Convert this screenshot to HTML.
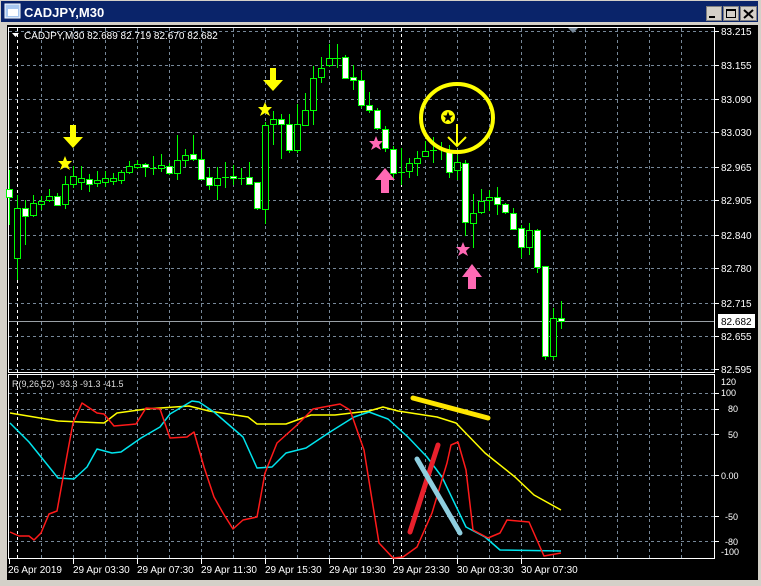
<!DOCTYPE html>
<html><head><meta charset="utf-8"><style>
html,body{margin:0;padding:0;width:761px;height:586px;overflow:hidden;background:#d4d0c8}
svg{display:block}
text{font-family:"Liberation Sans",sans-serif}
</style></head><body>
<svg width="761" height="586" viewBox="0 0 761 586" xmlns="http://www.w3.org/2000/svg">
<rect x="0" y="0" width="761" height="586" fill="#d4d0c8"/>
<rect x="1" y="1" width="757" height="21" fill="#0a246a"/>
<rect x="5" y="4" width="15" height="14" fill="#a8c8f0" stroke="#fff" stroke-width="1"/>
<rect x="8" y="9" width="10" height="7" fill="#fff"/>
<text x="24" y="17" font-size="13" font-weight="bold" fill="#fff">CADJPY,M30</text>
<g fill="#d4d0c8" stroke="#808080"><rect x="706.5" y="6.5" width="15" height="14"/><rect x="723.5" y="6.5" width="15" height="14"/><rect x="740.5" y="6.5" width="16" height="14"/></g>
<rect x="709" y="16" width="6" height="2" fill="#000"/>
<rect x="726.5" y="9.5" width="9" height="8" fill="none" stroke="#000"/><rect x="726" y="9" width="10" height="2" fill="#000"/>
<path d="M744 10 L753 18 M753 10 L744 18" stroke="#000" stroke-width="2"/>
<rect x="7" y="25" width="751" height="555" fill="#000"/>
<!-- plot borders -->
<g stroke="#fff" fill="none"><rect x="8.5" y="27.5" width="706" height="345"/><rect x="8.5" y="374.5" width="706" height="184"/></g>
<!-- grid -->
<g stroke="#778899" stroke-dasharray="3,3" stroke-width="1">
<path d="M9 31.5H714M9 65.5H714M9 99.5H714M9 132.5H714M9 167.5H714M9 200.5H714M9 235.5H714M9 268.5H714M9 303.5H714M9 336.5H714M9 369.5H714"/>
<path d="M9 393.5H714M9 409.5H714M9 434.5H714M9 475.5H714M9 516.5H714M9 541.5H714"/>
<path d="M41.5 28V372M73.5 28V372M105.5 28V372M137.5 28V372M169.5 28V372M201.5 28V372M233.5 28V372M265.5 28V372M297.5 28V372M329.5 28V372M361.5 28V372M393.5 28V372M425.5 28V372M457.5 28V372M489.5 28V372M521.5 28V372M553.5 28V372M585.5 28V372M617.5 28V372M649.5 28V372M681.5 28V372"/>
<path d="M41.5 375V558M73.5 375V558M105.5 375V558M137.5 375V558M169.5 375V558M201.5 375V558M233.5 375V558M265.5 375V558M297.5 375V558M329.5 375V558M361.5 375V558M393.5 375V558M425.5 375V558M457.5 375V558M489.5 375V558M521.5 375V558M553.5 375V558M585.5 375V558M617.5 375V558M649.5 375V558M681.5 375V558"/>
</g>
<g stroke="#fff" stroke-dasharray="3,3"><path d="M17.5 28V372M401.5 28V372M17.5 375V558M401.5 375V558"/></g>
<path d="M9 321.5H714" stroke="#9aa0a6"/>
<path d="M568 28 L578 28 L573 33Z" fill="#778899"/>
<!-- candles -->
<g stroke="#00ff00" stroke-width="1">
<path d="M9.5 170V225M17.5 195V280M25.5 200V245M33.5 195V217M41.5 196V210M49.5 189V202M57.5 193V206M65.5 176V209M73.5 166V188M81.5 166V190M89.5 174V192M97.5 171V187M105.5 171V187M113.5 173V185M121.5 170V184M129.5 161V174M137.5 160V169M145.5 163V177M153.5 156V175M161.5 154V172M169.5 163V175M177.5 135V180M185.5 149V167M193.5 135V161M201.5 150V180M209.5 168V190M217.5 167V200M225.5 162V188M233.5 165V185M241.5 168V185M249.5 162V185M257.5 182V210M265.5 122V224M273.5 111V145M281.5 114V159M289.5 114V153M297.5 104V153M305.5 93V126M313.5 66V125M321.5 57V83M329.5 44V67M337.5 44V68M345.5 55V78M353.5 65V90M361.5 71V108M369.5 92V113M377.5 108V130M385.5 126V152M393.5 146V178M401.5 148V185M409.5 158V178M417.5 151V176M425.5 141V157M433.5 137V163M441.5 142V160M449.5 145V178M457.5 155V180M465.5 160V236M473.5 194V248M481.5 189V214M489.5 190V211M497.5 187V215M505.5 203V214M513.5 208V230M521.5 225V258M529.5 223V255M537.5 229V273M545.5 266V360M553.5 308V360M561.5 301V329"/>
<path d="M150 168.5H157M222 177.5H229M238 178.5H245M330 58.5H341M398 172.5H405M430 150.5H437"/>
</g>
<g stroke="#00ff00" stroke-width="1" fill="#fff">
<rect x="6.5" y="189.5" width="6" height="8"/><rect x="22.5" y="208.5" width="6" height="8"/><rect x="54.5" y="196.5" width="6" height="9"/><rect x="86.5" y="179.5" width="6" height="5"/><rect x="142.5" y="164.5" width="6" height="3"/><rect x="166.5" y="166.5" width="6" height="7"/><rect x="190.5" y="154.5" width="6" height="5"/><rect x="198.5" y="159.5" width="6" height="20"/><rect x="206.5" y="177.5" width="6" height="8"/><rect x="230.5" y="176.5" width="6" height="2"/><rect x="246.5" y="177.5" width="6" height="7"/><rect x="254.5" y="182.5" width="6" height="26"/><rect x="278.5" y="119.5" width="6" height="5"/><rect x="286.5" y="124.5" width="6" height="26"/><rect x="342.5" y="57.5" width="6" height="21"/><rect x="350.5" y="77.5" width="6" height="3"/><rect x="358.5" y="80.5" width="6" height="25"/><rect x="366.5" y="105.5" width="6" height="5"/><rect x="374.5" y="110.5" width="6" height="18"/><rect x="382.5" y="129.5" width="6" height="19"/><rect x="390.5" y="149.5" width="6" height="24"/><rect x="446.5" y="150.5" width="6" height="22"/><rect x="462.5" y="163.5" width="6" height="59"/><rect x="494.5" y="197.5" width="6" height="7"/><rect x="502.5" y="204.5" width="6" height="8"/><rect x="510.5" y="213.5" width="6" height="16"/><rect x="518.5" y="228.5" width="6" height="19"/><rect x="534.5" y="230.5" width="6" height="37"/><rect x="542.5" y="266.5" width="6" height="90"/><rect x="558.5" y="318.5" width="6" height="3"/>
</g>
<g stroke="#00ff00" stroke-width="1" fill="#000">
<rect x="14.5" y="208.5" width="6" height="50"/><rect x="30.5" y="203.5" width="6" height="12"/><rect x="38.5" y="201.5" width="6" height="3"/><rect x="46.5" y="196.5" width="6" height="4"/><rect x="62.5" y="184.5" width="6" height="20"/><rect x="70.5" y="176.5" width="6" height="8"/><rect x="78.5" y="178.5" width="6" height="4"/><rect x="94.5" y="180.5" width="6" height="3"/><rect x="102.5" y="178.5" width="6" height="4"/><rect x="110.5" y="178.5" width="6" height="3"/><rect x="118.5" y="172.5" width="6" height="8"/><rect x="126.5" y="166.5" width="6" height="6"/><rect x="134.5" y="164.5" width="6" height="3"/><rect x="158.5" y="165.5" width="6" height="3"/><rect x="174.5" y="160.5" width="6" height="13"/><rect x="182.5" y="155.5" width="6" height="5"/><rect x="214.5" y="178.5" width="6" height="7"/><rect x="262.5" y="125.5" width="6" height="84"/><rect x="270.5" y="119.5" width="6" height="5"/><rect x="294.5" y="124.5" width="6" height="26"/><rect x="302.5" y="110.5" width="6" height="15"/><rect x="310.5" y="78.5" width="6" height="32"/><rect x="318.5" y="68.5" width="6" height="9"/><rect x="326.5" y="58.5" width="6" height="7"/><rect x="406.5" y="163.5" width="6" height="8"/><rect x="414.5" y="158.5" width="6" height="5"/><rect x="422.5" y="151.5" width="6" height="5"/><rect x="454.5" y="162.5" width="6" height="8"/><rect x="470.5" y="213.5" width="6" height="10"/><rect x="478.5" y="201.5" width="6" height="11"/><rect x="486.5" y="197.5" width="6" height="3"/><rect x="526.5" y="230.5" width="6" height="17"/><rect x="550.5" y="318.5" width="6" height="38"/>
</g>
<!-- markers -->
<g fill="#ffff00">
<path d="M65 156 L67 161 L72 161 L68 165 L70 170 L65 167 L60 170 L62 165 L58 161 L63 161Z"/>
<path d="M265 102 L267 107 L272 107 L268 111 L270 116 L265 113 L260 116 L262 111 L258 107 L263 107Z"/>
<path d="M70 125 H76 V137 H83 L73 148 L63 137 H70Z"/>
<path d="M270 68 H276 V80 H283 L273 91 L263 80 H270Z"/>
</g>
<g fill="#ff69b4">
<path d="M376 136 L378 141 L383 141 L379 145 L381 150 L376 147 L371 150 L373 145 L369 141 L374 141Z"/>
<path d="M463 242 L465 247 L470 247 L466 251 L468 256 L463 253 L458 256 L460 251 L456 247 L461 247Z"/>
<path d="M385 168 L395 180 L389 180 L389 193 L381 193 L381 180 L375 180Z"/>
<path d="M472 264 L482 277 L476 277 L476 289 L468 289 L468 277 L462 277Z"/>
</g>
<ellipse cx="457" cy="118" rx="36" ry="34" fill="none" stroke="#ffff00" stroke-width="4"/>
<circle cx="448" cy="117" r="7" fill="#ffff00"/>
<path d="M448 111.5 L449.5 115.5 L453 115.5 L450.3 118 L451.3 122 L448 119.5 L444.7 122 L445.7 118 L443 115.5 L446.5 115.5Z" fill="#000"/>
<path d="M457 124 V146 M448 137 L457 146 L466 137" stroke="#ffff00" stroke-width="2" fill="none"/>
<!-- header -->
<path d="M12 33 L19 33 L15.5 37Z" fill="#fff"/>
<text x="24" y="39" font-size="10" fill="#fff">CADJPY,M30  82.689 82.719 82.670 82.682</text>
<!-- price axis -->
<g font-size="10" fill="#fff">
<text x="721" y="35">83.215</text><text x="721" y="69">83.155</text><text x="721" y="103">83.090</text><text x="721" y="136">83.030</text><text x="721" y="171">82.965</text><text x="721" y="204">82.905</text><text x="721" y="239">82.840</text><text x="721" y="272">82.780</text><text x="721" y="307">82.715</text><text x="721" y="340">82.655</text><text x="721" y="373">82.595</text>
</g>
<rect x="718" y="314" width="37" height="14" fill="#fff"/>
<text x="721" y="325" font-size="10" fill="#000">82.682</text>
<g font-size="9" fill="#fff">
<text x="721" y="385">120</text><text x="721" y="396">100</text><text x="728" y="412">80</text><text x="728" y="438">50</text><text x="721" y="479">0.00</text><text x="725" y="520">-50</text><text x="725" y="545">-80</text><text x="721" y="555">-100</text>
</g>
<path d="M715 393.5H719M715 409.5H719M715 434.5H719M715 475.5H719M715 516.5H719M715 541.5H719M715 31.5H719M715 65.5H719M715 99.5H719M715 132.5H719M715 167.5H719M715 200.5H719M715 235.5H719M715 268.5H719M715 303.5H719M715 336.5H719M715 369.5H719" stroke="#fff"/>
<text x="12" y="387" font-size="9" fill="#dcdcdc">R(9,26,52) -93.3 -91.3 -41.5</text>
<!-- indicator lines -->
<g fill="none" stroke-width="1.5" stroke-linejoin="round">
<polyline stroke="#ffff00" points="10,413 58,421 104,423 117,413 146,409 189,406 209,411 248,417 257,424 286,424 311,415 335,415 369,411 383,407 398,411 437,417 456,423 485,453 515,477 534,495 561,510"/>
<polyline stroke="#00e5ee" points="10,423 29,442 58,478 74,479 87,467 97,449 112,453 121,452 141,438 160,427 170,414 192,401 199,402 214,412 243,437 257,468 272,467 286,453 306,448 330,432 354,417 369,412 388,419 408,437 427,457 442,477 466,527 485,537 500,550 561,551"/>
<polyline stroke="#ff1a1a" points="10,532 19,536 29,536 34,540 41,533 49,514 57,511 68,450 73,423 82,403 97,413 104,414 114,426 136,424 146,408 160,409 170,438 187,437 194,432 204,467 214,497 223,513 233,529 243,520 257,517 265,473 277,443 296,426 313,409 340,404 350,410 364,450 379,543 393,558 403,557 417,547 432,513 447,463 451,445 458,442 466,470 473,530 488,538 500,533 507,520 529,522 544,556 561,553"/>
</g>
<g stroke-width="5" stroke-linecap="round">
<path d="M413 398 L488 418" stroke="#ffe600"/>
<path d="M410 532 L438 445" stroke="#e8202c"/>
<path d="M417 459 L460 533" stroke="#8fcfe0"/>
</g>
<!-- time axis -->
<path d="M9.5 559V564M73.5 559V564M137.5 559V564M201.5 559V564M265.5 559V564M329.5 559V564M393.5 559V564M457.5 559V564M521.5 559V564" stroke="#fff"/>
<g font-size="10" fill="#fff">
<text x="8" y="573">26 Apr 2019</text><text x="73" y="573">29 Apr 03:30</text><text x="137" y="573">29 Apr 07:30</text><text x="201" y="573">29 Apr 11:30</text><text x="265" y="573">29 Apr 15:30</text><text x="329" y="573">29 Apr 19:30</text><text x="393" y="573">29 Apr 23:30</text><text x="457" y="573">30 Apr 03:30</text><text x="521" y="573">30 Apr 07:30</text>
</g>
</svg>
</body></html>
